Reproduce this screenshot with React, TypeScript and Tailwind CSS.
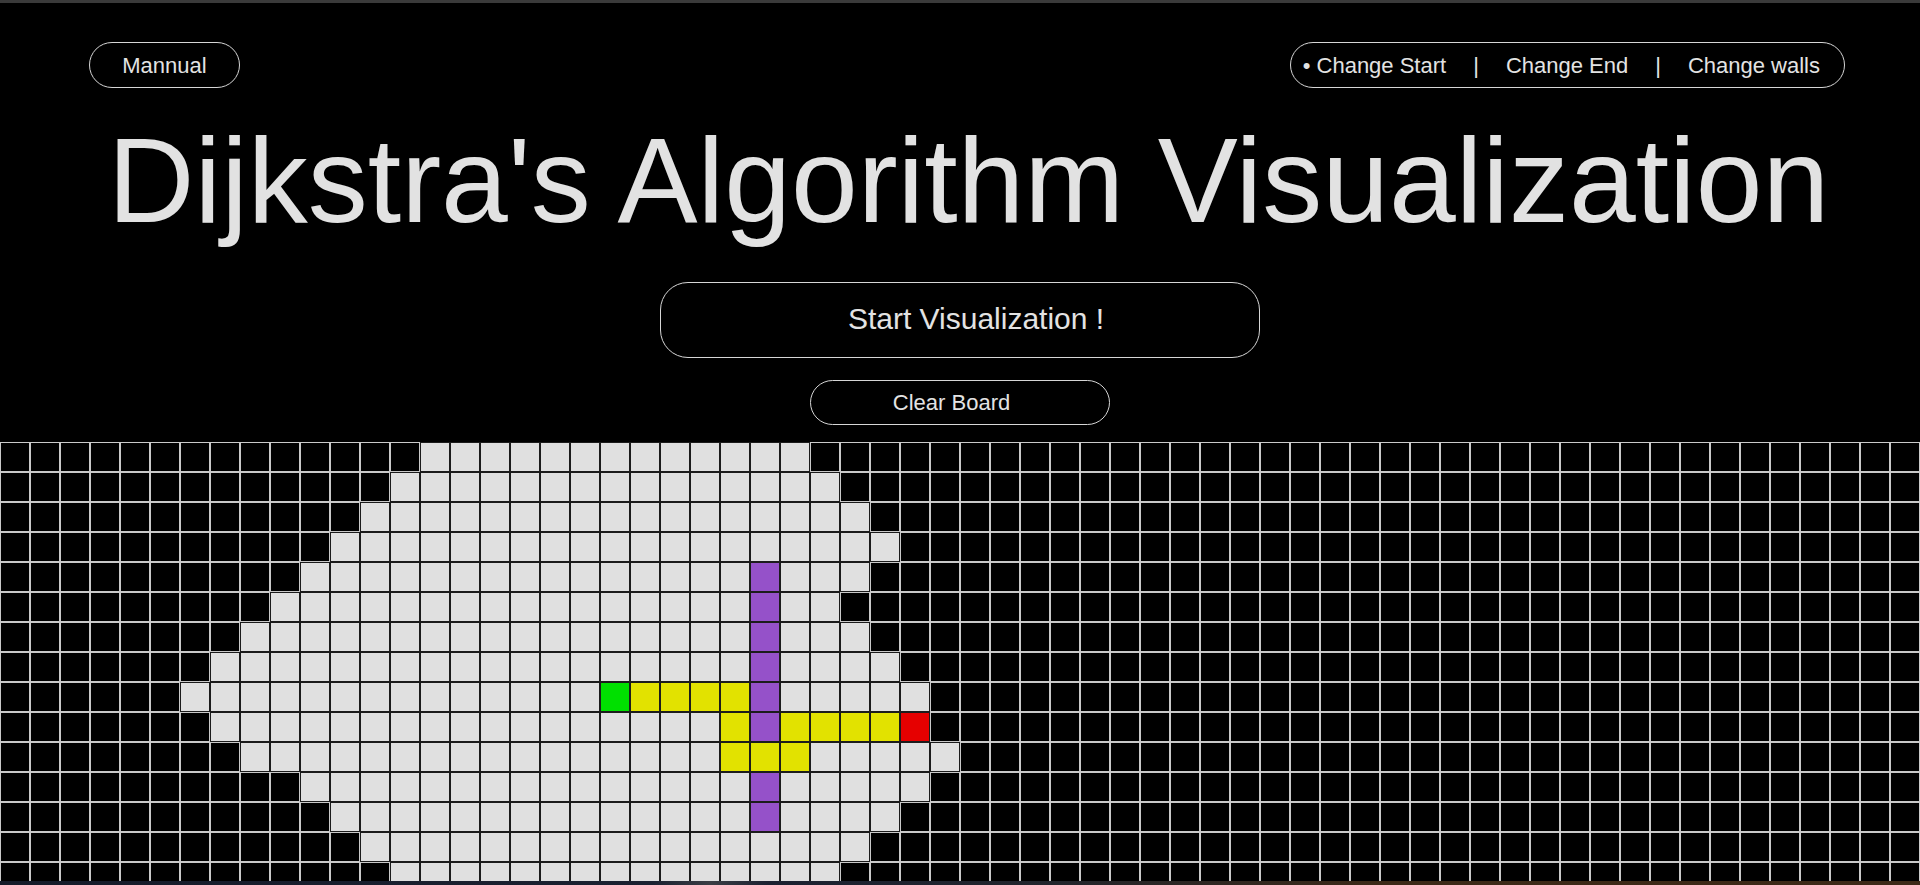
import React from "react";

const COLS = 64;
const ROWS = 15;

// wall span per row: [startCol, endCol]
const WALLS: [number, number][] = [
  [14, 26],
  [13, 27],
  [12, 28],
  [11, 29],
  [10, 28],
  [9, 27],
  [8, 28],
  [7, 29],
  [6, 30],
  [7, 29],
  [8, 31],
  [10, 30],
  [11, 29],
  [12, 28],
  [13, 27],
];

type Kind = "empty" | "wall" | "start" | "end" | "path" | "block";

const KIND_CLASS: Record<Kind, string> = {
  empty: "bg-black border-[#c9c9c9]",
  wall: "bg-[#e0e0e0] border-[#1c1c1c]",
  start: "bg-[#00e000] border-[#1c1c1c]",
  end: "bg-[#e60000] border-[#1c1c1c]",
  path: "bg-[#e2e200] border-[#1c1c1c]",
  block: "bg-[#9551c9] border-[#1c1c1c]",
};

function kindOf(r: number, c: number): Kind {
  if (r === 8 && c === 20) return "start";
  if (r === 9 && c === 30) return "end";
  if (r === 8 && c >= 21 && c <= 24) return "path";
  if (r === 9 && (c === 24 || (c >= 26 && c <= 29))) return "path";
  if (r === 10 && c >= 24 && c <= 26) return "path";
  if (c === 25 && ((r >= 4 && r <= 9) || r === 11 || r === 12)) return "block";
  const w = WALLS[r];
  if (w && c >= w[0] && c <= w[1]) return "wall";
  return "empty";
}

function Board() {
  const cells: React.ReactNode[] = [];
  for (let r = 0; r < ROWS; r++) {
    for (let c = 0; c < COLS; c++) {
      const k = kindOf(r, c);
      cells.push(
        <div
          key={`${r}-${c}`}
          className={`w-[30px] h-[30px] box-border border ${KIND_CLASS[k]}`}
        />
      );
    }
  }
  return <div className="grid grid-cols-[repeat(64,30px)] shrink-0">{cells}</div>;
}

export default function App() {
  return (
    <div className="h-[885px] w-[1920px] overflow-hidden bg-black flex flex-col font-['Liberation_Sans',Arial,sans-serif] text-[#e3e3e3]">
      <div className="h-[3px] shrink-0 bg-[#3a3a3a]" />
      <div className="flex-1 overflow-hidden flex flex-col">
        <div className="mt-[39px] flex items-center justify-between pl-[89px] pr-[75px] shrink-0">
          <button className="w-[151px] h-[46px] rounded-full border border-[#d6d6d6] flex items-center justify-center text-[22px] text-[#e3e3e3]">
            Mannual
          </button>
          <div className="h-[46px] rounded-full border border-[#d6d6d6] flex items-center pl-[12px] pr-[24px] gap-[27px] text-[22px] text-[#e3e3e3]">
            <span>• Change Start</span>
            <span>|</span>
            <span>Change End</span>
            <span>|</span>
            <span>Change walls</span>
          </div>
        </div>
        <h1 className="mt-[32px] h-[120px] leading-[120px] text-[120px] text-center pl-[17px] font-normal text-[#e2e2e2] whitespace-nowrap shrink-0">
          Dijkstra's Algorithm Visualization
        </h1>
        <button className="mt-[42px] self-center w-[600px] h-[76px] rounded-[28px] border border-[#d6d6d6] flex items-center justify-center pl-[32px] pb-[4px] text-[30px] text-[#e3e3e3] shrink-0">
          Start Visualization !
        </button>
        <button className="mt-[22px] self-center w-[300px] h-[45px] rounded-full border border-[#d6d6d6] flex items-center justify-center pr-[17px] text-[22px] text-[#e3e3e3] shrink-0">
          Clear Board
        </button>
        <div className="mt-[17px]">
          <Board />
        </div>
      </div>
      <div className="h-[4px] shrink-0 bg-[linear-gradient(to_right,#151b29_0%,#1b2131_34%,#3a3d44_37%,#1b2131_40%,#22252c_55%,#3c2917_72%,#3d2a18_100%)]" />
    </div>
  );
}
